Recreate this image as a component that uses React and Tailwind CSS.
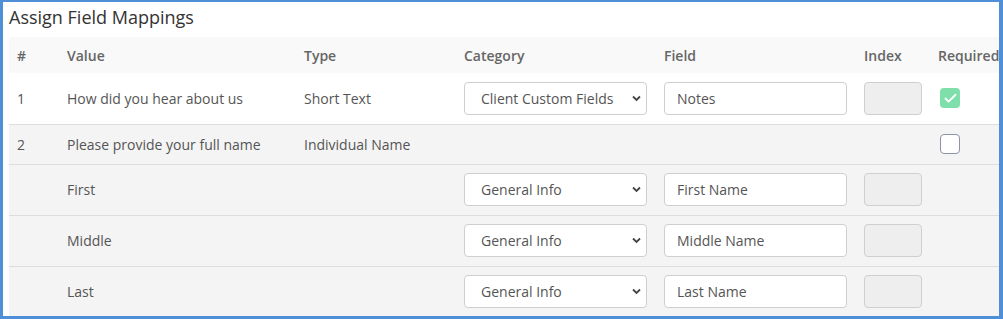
import { Check } from "lucide-react";

const rows = [
  { num: "1", value: "How did you hear about us", type: "Short Text", category: "Client Custom Fields", field: "Notes", required: true, white: true },
  { num: "2", value: "Please provide your full name", type: "Individual Name", header: true, required: false },
  { value: "First", category: "General Info", field: "First Name" },
  { value: "Middle", category: "General Info", field: "Middle Name" },
  { value: "Last", category: "General Info", field: "Last Name", last: true },
];

function Select({ value }) {
  return (
    <div className="relative w-[183px]">
      <select
        defaultValue={value}
        className="appearance-none w-full h-[33px] bg-white border border-[#cfcfcf] rounded-[4px] pl-4 pr-8 text-[14px] text-[#555] outline-none"
      >
        <option>{value}</option>
      </select>
      <svg
        className="absolute right-[6px] top-[13px] pointer-events-none"
        width="9"
        height="7"
        viewBox="0 0 9 7"
      >
        <path d="M1 1.5 L4.5 5 L8 1.5" fill="none" stroke="#444" strokeWidth="1.8" />
      </svg>
    </div>
  );
}

export default function App() {
  return (
    <div className="w-[1003px] h-[319px] overflow-hidden bg-[#4f8fd8] pt-[2px] pl-[3px] pr-[4px] pb-[3px]" style={{ fontFamily: '"Open Sans", sans-serif' }}>
      <div className="h-full bg-white pl-[6px] overflow-hidden">
        <h2 className="text-[18px] text-[#333] h-[35px] leading-[31px]">Assign Field Mappings</h2>
        <table className="table-fixed border-collapse w-[1000px] text-[14px] text-[#555]">
          <colgroup>
            <col className="w-[50px]" />
            <col className="w-[237px]" />
            <col className="w-[160px]" />
            <col className="w-[200px]" />
            <col className="w-[200px]" />
            <col className="w-[74px]" />
            <col className="w-[79px]" />
          </colgroup>
          <thead>
            <tr className="bg-[#f9f9f9] h-[36px] text-left text-[#666]">
              <th className="font-semibold px-2">#</th>
              <th className="font-semibold px-2">Value</th>
              <th className="font-semibold px-2">Type</th>
              <th className="font-semibold px-2">Category</th>
              <th className="font-semibold px-2">Field</th>
              <th className="font-semibold px-2">Index</th>
              <th className="font-semibold px-2 whitespace-nowrap">Required</th>
            </tr>
          </thead>
          <tbody>
            {rows.map((r, i) => (
              <tr
                key={i}
                className={`${r.white ? "bg-white" : "bg-[#f4f4f4]"} ${r.last ? "" : "border-b border-[#dddddd]"} ${r.header ? "h-[40px]" : "h-[51px]"}`}
              >
                <td className="px-2">{r.num}</td>
                <td className="px-2">{r.value}</td>
                <td className="px-2">{r.type}</td>
                <td className="px-2">{r.category && <Select value={r.category} />}</td>
                <td className="px-2">
                  {r.field && (
                    <input
                      defaultValue={r.field}
                      className="w-[183px] h-[33px] bg-white border border-[#cfcfcf] rounded-[4px] px-3 text-[14px] text-[#555] outline-none"
                    />
                  )}
                </td>
                <td className="px-2">
                  {!r.header && (
                    <div className="w-[58px] h-[33px] bg-[#eeeeee] border border-[#cfcfcf] rounded-[4px]" />
                  )}
                </td>
                <td className="px-2 pl-[10px]">
                  {r.required === true && (
                    <div className="w-[20px] h-[20px] rounded-[4px] bg-[#7edfab] flex items-center justify-center">
                      <Check size={15} strokeWidth={3} color="white" />
                    </div>
                  )}
                  {r.required === false && (
                    <div className="w-[20px] h-[20px] rounded-[4px] bg-white border-[1.5px] border-[#8c92a8]" />
                  )}
                </td>
              </tr>
            ))}
          </tbody>
        </table>
      </div>
    </div>
  );
}
